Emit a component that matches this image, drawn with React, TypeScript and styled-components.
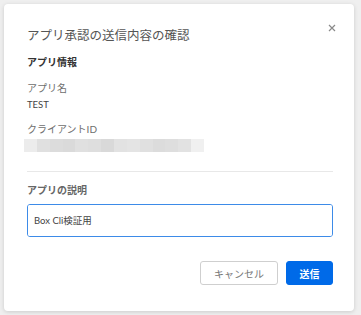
import styled, { createGlobalStyle } from 'styled-components';

const GlobalStyle = createGlobalStyle`
     html, body {
          margin: 0;
          padding: 0;
          background: #efefef;
          font-family: 'Lato', 'Noto Sans CJK JP', sans-serif;
     }
`;

const Page = styled.div`
     width: 361px;
     height: 315px;
     padding: 4px 0 0 4px;
     box-sizing: border-box;
`;

const Modal = styled.div`
     position: relative;
     width: 350px;
     height: 307px;
     box-sizing: border-box;
     padding: 22px 21px 0 23px;
     background: #fff;
     border-radius: 4px;
     box-shadow: 0 1px 4px rgba(0, 0, 0, 0.15);
     display: flex;
     flex-direction: column;
`;

const Title = styled.h1`
     margin: 0;
     font-size: 12.5px;
     line-height: 20px;
     font-weight: 400;
     color: #555;
`;

const CloseButton = styled.button`
     position: absolute;
     top: 15px;
     right: 13px;
     width: 18px;
     height: 18px;
     padding: 0;
     border: none;
     background: none;
     display: flex;
     align-items: center;
     justify-content: center;
     cursor: pointer;
`;

const SectionTitle = styled.h2`
     margin: 9px 0 0;
     font-size: 10px;
     line-height: 14px;
     font-weight: 700;
     color: #333;
`;

const Label = styled.div<{ $strong?: boolean }>`
     margin-top: ${(p) => (p.$strong ? '11px' : '12px')};
     font-size: 10px;
     line-height: 15px;
     font-weight: ${(p) => (p.$strong ? 700 : 400)};
     color: ${(p) => (p.$strong ? '#666' : '#6e6e6e')};
`;

const Value = styled.div`
     margin-top: 2px;
     margin-bottom: -2px;
     font-size: 9.5px;
     line-height: 14px;
     color: #444;
`;

const Masked = styled.div`
     display: flex;
     margin: 2px 0 0 -3px;
     width: 180px;
     height: 13px;
     filter: blur(0.6px);
`;

const MaskBlock = styled.div<{ $shade: string }>`
     flex: 1;
     background: ${(p) => p.$shade};
`;

const Divider = styled.hr`
     margin: 19px 0 0;
     border: none;
     border-top: 1px solid #e8e8e8;
`;

const TextArea = styled.textarea`
     margin-top: 6px;
     height: 33px;
     box-sizing: border-box;
     padding: 9px 6px;
     border: 1px solid #3d8be8;
     border-radius: 3px;
     font-family: 'Lato', 'Noto Sans CJK JP', sans-serif;
     font-size: 9.5px;
     line-height: 14px;
     color: #444;
     resize: none;
     outline: none;
`;

const Footer = styled.div`
     margin-top: 24px;
     display: flex;
     justify-content: flex-end;
     gap: 8px;
`;

const Button = styled.button<{ $primary?: boolean }>`
     height: 24px;
     padding: 0;
     width: ${(p) => (p.$primary ? '47px' : '78px')};
     border-radius: 3px;
     border: 1px solid ${(p) => (p.$primary ? '#006ae8' : '#cfcfcf')};
     background: ${(p) => (p.$primary ? '#006ae8' : '#fff')};
     color: ${(p) => (p.$primary ? '#fff' : '#767676')};
     font-family: 'Lato', 'Noto Sans CJK JP', sans-serif;
     font-size: 10px;
     font-weight: ${(p) => (p.$primary ? 700 : 400)};
     cursor: pointer;
`;

const shades = [
     '#ececec', '#e0e0e0', '#dcdcdc', '#dadada', '#e0e0e0', '#dedede', '#d9d9d9', '#e2e2e2',
     '#e4e4e4', '#e0e0e0', '#dcdcdc', '#dedede', '#e2e2e2', '#f0f0f0',
];

const App = () => {
     return (
          <>
               <GlobalStyle />
               <Page>
                    <Modal>
                         <Title>アプリ承認の送信内容の確認</Title>
                         <CloseButton aria-label='閉じる'>
                              <svg width='8' height='8' viewBox='0 0 8 8'>
                                   <path d='M1 1 L7 7 M7 1 L1 7' stroke='#8a8a8a' strokeWidth='1.2' />
                              </svg>
                         </CloseButton>

                         <SectionTitle>アプリ情報</SectionTitle>
                         <Label>アプリ名</Label>
                         <Value>TEST</Value>
                         <Label>クライアントID</Label>
                         <Masked>
                              {shades.map((shade, i) => (
                                   <MaskBlock key={i} $shade={shade} />
                              ))}
                         </Masked>

                         <Divider />

                         <Label $strong>アプリの説明</Label>
                         <TextArea defaultValue='Box Cli検証用' />

                         <Footer>
                              <Button>キャンセル</Button>
                              <Button $primary>送信</Button>
                         </Footer>
                    </Modal>
               </Page>
          </>
     );
};

export default App;
